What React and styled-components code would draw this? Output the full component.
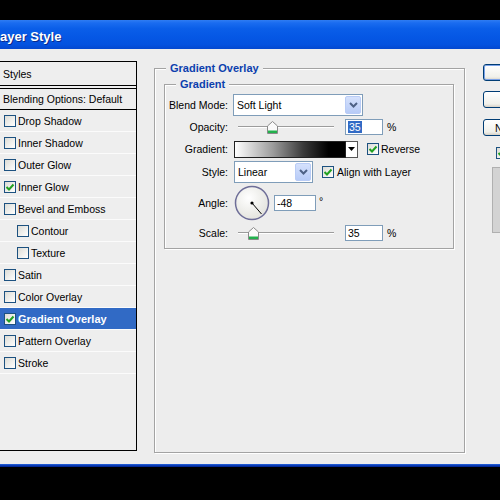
import React from "react";
import styled, { createGlobalStyle } from "styled-components";

const Global = createGlobalStyle`
  html, body { margin: 0; padding: 0; background: #000; }
  body { font-family: "Liberation Sans", Arial, sans-serif; }
  * { box-sizing: border-box; }
`;

const Screen = styled.div`
  width: 500px;
  height: 500px;
  overflow: hidden;
  background: #000;
  padding-top: 20px;
`;

const Window = styled.div`
  width: 500px;
  display: flex;
  flex-direction: column;
`;

const TitleBar = styled.div`
  height: 29px;
  display: flex;
  align-items: center;
  padding-top: 3px;
  background: linear-gradient(
    to bottom,
    #2f7cf2 0%,
    #1a6cf0 10%,
    #0a5ee8 30%,
    #0557e4 60%,
    #0452df 85%,
    #0448cf 100%
  );
`;

const Title = styled.span`
  margin-left: -8px;
  color: #fff;
  font: bold 13px "Liberation Sans", Arial, sans-serif;
  text-shadow: 1px 1px 0 #0a2a8a;
`;

const Body = styled.div`
  height: 415px;
  background: #ededed;
  display: flex;
  align-items: flex-start;
  padding-top: 12px;
`;

const BottomEdge = styled.div`
  height: 3px;
  background: linear-gradient(to bottom, #2a66e0, #0a3cb4 50%, #02208a);
`;

/* ---------- left style list ---------- */

const StylesPanel = styled.div`
  flex-shrink: 0;
  width: 138px;
  height: 390px;
  margin-left: -1px;
  border: 1px solid #000;
  background: #eeeeee;
  display: flex;
  flex-direction: column;
  font-size: 10.5px;
`;

const PanelHeader = styled.div`
  height: ${(p) => (p.$boxed ? 22 : 24)}px;
  display: flex;
  align-items: center;
  padding-left: 3px;
  border-bottom: 1px solid #000;
  ${(p) => p.$boxed && "border-top: 1px solid #000; margin-top: 2px;"}
`;

const StyleItem = styled.div`
  height: 22px;
  display: flex;
  align-items: center;
  gap: 2px;
  padding-left: ${(p) => (p.$indent ? 17 : 4)}px;
  border-bottom: 1px solid #fbfbfb;
  background: ${(p) => (p.$active ? "#316ac5" : "transparent")};
  color: ${(p) => (p.$active ? "#fff" : "#000")};
  font-weight: ${(p) => (p.$active ? "bold" : "normal")};
  font-size: ${(p) => (p.$active ? "11px" : "10.5px")};
`;

const Box = styled.span`
  flex-shrink: 0;
  width: 12px;
  height: 12px;
  border: 1px solid #1c5180;
  background: linear-gradient(135deg, #dcdcd6, #ffffff);
  display: inline-flex;
  align-items: center;
  justify-content: center;
`;

const Check = ({ on }) => (
  <Box>
    {on && (
      <svg width="10" height="10" viewBox="0 0 10 10">
        <path d="M1.5 5 L4 7.5 L8.5 2.5" fill="none" stroke="#21a121" strokeWidth="2" />
      </svg>
    )}
  </Box>
);

/* ---------- group boxes ---------- */

const Main = styled.div`
  margin-left: 17px;
  margin-top: 7px;
  width: 311px;
  height: 385px;
`;

const Group = styled.div`
  border: 1px solid #a3a3a3;
  box-shadow: inset 1px 1px 0 #fff, 1px 1px 0 #fff;
  display: flex;
  flex-direction: column;
  width: ${(p) => p.$w}px;
  height: ${(p) => p.$h}px;
  margin: ${(p) => p.$m || "0"};
`;

const Legend = styled.span`
  align-self: flex-start;
  margin: -7px 0 0 11px;
  padding: 0 4px;
  background: #ededed;
  color: #0c3fae;
  font: bold 11px "Liberation Sans", Arial, sans-serif;
  line-height: 13px;
`;

const Rows = styled.div`
  margin-top: 3px;
  display: flex;
  flex-direction: column;
  font-size: 10.5px;
`;

const Row = styled.div`
  display: grid;
  grid-template-columns: 63px 1fr;
  column-gap: 5px;
  align-items: center;
  height: ${(p) => p.$h}px;
`;

const Label = styled.span`
  text-align: right;
`;

const Controls = styled.div`
  display: flex;
  align-items: center;
  height: 100%;
`;

const Select = styled.div`
  width: ${(p) => p.$w}px;
  height: 22px;
  margin-left: ${(p) => p.$ml || 0}px;
  border: 1px solid #7f9db9;
  background: #fff;
  display: flex;
  align-items: center;
  justify-content: space-between;
  padding: 1px 1px 1px 3px;
`;

const SelectButton = styled.span`
  width: 16px;
  height: 18px;
  border: 1px solid #b9ccf6;
  border-radius: 2px;
  background: linear-gradient(to bottom, #d5e1fc, #b7cbf7);
  display: inline-flex;
  align-items: center;
  justify-content: center;
`;

const Chevron = () => (
  <svg width="9" height="6" viewBox="0 0 9 6">
    <path d="M1 1 L4.5 4.5 L8 1" fill="none" stroke="#4d6185" strokeWidth="2" />
  </svg>
);

const Field = styled.span`
  width: ${(p) => p.$w}px;
  height: 16px;
  margin-left: ${(p) => p.$ml || 0}px;
  border: 1px solid #7f9db9;
  background: #fff;
  display: inline-flex;
  align-items: center;
  padding-left: 2px;
`;

const Selected = styled.span`
  background: #316ac5;
  color: #fff;
  padding: 0 1px;
`;

const Unit = styled.span`
  margin-left: 4px;
  ${(p) => p.$raised && "align-self: flex-start; margin-top: 11px; margin-left: 3px;"}
`;

const SliderWrap = styled.div`
  position: relative;
  width: 112px;
  height: 100%;
`;

const Track = styled.div`
  position: absolute;
  left: 5px;
  right: 11px;
  top: 10px;
  height: 2px;
  border-top: 1px solid #9c9c9c;
  border-bottom: 1px solid #fff;
`;

const Thumb = styled.svg`
  position: absolute;
  top: 5px;
`;

const Slider = ({ pos }) => (
  <SliderWrap>
    <Track />
    <Thumb width="11" height="13" viewBox="0 0 11 13" style={{ left: pos }}>
      <path d="M0.5 5 L5.5 0.5 L10.5 5 L10.5 12.5 L0.5 12.5 Z" fill="#fafafa" stroke="#8a8a8a" />
      <rect x="1" y="9.5" width="9" height="2.5" fill="#22b14c" />
    </Thumb>
  </SliderWrap>
);

const Swatch = styled.span`
  width: 112px;
  height: 17px;
  margin-left: 1px;
  border: 1px solid #222;
  background: linear-gradient(to right, #fff 0%, #9a9a9a 35%, #3a3a3a 62%, #000 85%);
`;

const SwatchButton = styled.span`
  width: 12px;
  height: 17px;
  border: 1px solid #555;
  border-left: none;
  background: #fff;
  display: inline-flex;
  align-items: center;
  justify-content: center;
`;

const CheckLabel = styled.span`
  display: inline-flex;
  align-items: center;
  gap: ${(p) => p.$gap || 2}px;
  margin-left: ${(p) => (p.$flush ? 0 : 9)}px;
`;

const Dial = styled.svg`
  margin-left: 1px;
  flex-shrink: 0;
`;

const Sidebar = styled.div`
  margin-left: 18px;
  margin-top: 3px;
  display: flex;
  flex-direction: column;
  font-size: 10.5px;
`;

const Button = styled.div`
  width: 80px;
  height: 17px;
  margin-bottom: ${(p) => p.$mb || 0}px;
  border: 1px solid #003c74;
  border-radius: 3px;
  background: linear-gradient(to bottom, #ffffff, #f0f0ea 80%, #d6d0c5);
  display: flex;
  align-items: center;
  justify-content: center;
  white-space: nowrap;
  ${(p) => p.$default && "box-shadow: inset 0 0 0 1px #7ba2e7;"}
`;

const SideCheck = styled.div`
  margin: 11px 0 0 13px;
`;

const PreviewBox = styled.div`
  margin: 7px 0 0 9px;
  width: 60px;
  height: 66px;
  background: #d3d3d3;
  border: 1px solid #b0b0b0;
`;

const styleItems = [
  { name: "Drop Shadow" },
  { name: "Inner Shadow" },
  { name: "Outer Glow" },
  { name: "Inner Glow", on: true },
  { name: "Bevel and Emboss" },
  { name: "Contour", indent: true },
  { name: "Texture", indent: true },
  { name: "Satin" },
  { name: "Color Overlay" },
  { name: "Gradient Overlay", on: true, active: true },
  { name: "Pattern Overlay" },
  { name: "Stroke" },
];

export default function App() {
  return (
    <Screen>
      <Global />
      <Window>
        <TitleBar>
          <Title>Layer Style</Title>
        </TitleBar>
        <Body>
          <StylesPanel>
            <PanelHeader>Styles</PanelHeader>
            <PanelHeader $boxed>Blending Options: Default</PanelHeader>
            {styleItems.map((it) => (
              <StyleItem key={it.name} $indent={it.indent} $active={it.active}>
                <Check on={it.on} />
                {it.name}
              </StyleItem>
            ))}
          </StylesPanel>

          <Main>
            <Group $w={311} $h={385}>
              <Legend>Gradient Overlay</Legend>
              <Group $w={290} $h={165} $m="9px 0 0 9px">
                <Legend>Gradient</Legend>
                <Rows>
                  <Row $h={22}>
                    <Label>Blend Mode:</Label>
                    <Controls>
                      <Select $w={130}>
                        Soft Light
                        <SelectButton>
                          <Chevron />
                        </SelectButton>
                      </Select>
                    </Controls>
                  </Row>
                  <Row $h={22}>
                    <Label>Opacity:</Label>
                    <Controls>
                      <Slider pos={34} />
                      <Field $w={38}>
                        <Selected>35</Selected>
                      </Field>
                      <Unit>%</Unit>
                    </Controls>
                  </Row>
                  <Row $h={22}>
                    <Label>Gradient:</Label>
                    <Controls>
                      <Swatch />
                      <SwatchButton>
                        <svg width="7" height="4" viewBox="0 0 7 4">
                          <path d="M0 0 L7 0 L3.5 4 Z" fill="#000" />
                        </svg>
                      </SwatchButton>
                      <CheckLabel>
                        <Check on />
                        Reverse
                      </CheckLabel>
                    </Controls>
                  </Row>
                  <Row $h={24}>
                    <Label>Style:</Label>
                    <Controls>
                      <Select $w={79} $ml={1}>
                        Linear
                        <SelectButton>
                          <Chevron />
                        </SelectButton>
                      </Select>
                      <CheckLabel $gap={3}>
                        <Check on />
                        Align with Layer
                      </CheckLabel>
                    </Controls>
                  </Row>
                  <Row $h={38}>
                    <Label>Angle:</Label>
                    <Controls>
                      <Dial width="36" height="36" viewBox="0 0 36 36">
                        <defs>
                          <radialGradient id="dialFace" cx="40%" cy="35%" r="70%">
                            <stop offset="0%" stopColor="#ffffff" />
                            <stop offset="100%" stopColor="#e2e2dc" />
                          </radialGradient>
                        </defs>
                        <circle cx="18" cy="18" r="16.5" fill="url(#dialFace)" stroke="#6e6e98" strokeWidth="1.5" />
                        <circle cx="18" cy="18" r="1.6" fill="#000" />
                        <line x1="18" y1="18" x2="27.5" y2="29" stroke="#000" strokeWidth="1" />
                      </Dial>
                      <Field $w={42} $ml={4}>-48</Field>
                      <Unit $raised>°</Unit>
                    </Controls>
                  </Row>
                  <Row $h={22}>
                    <Label>Scale:</Label>
                    <Controls>
                      <Slider pos={15} />
                      <Field $w={38}>35</Field>
                      <Unit>%</Unit>
                    </Controls>
                  </Row>
                </Rows>
              </Group>
            </Group>
          </Main>

          <Sidebar>
            <Button $default $mb={10}>OK</Button>
            <Button $mb={11}>Cancel</Button>
            <Button>New Style...</Button>
            <SideCheck>
              <CheckLabel $gap={3} $flush>
                <Check on />
                Preview
              </CheckLabel>
            </SideCheck>
            <PreviewBox />
          </Sidebar>
        </Body>
        <BottomEdge />
      </Window>
    </Screen>
  );
}
